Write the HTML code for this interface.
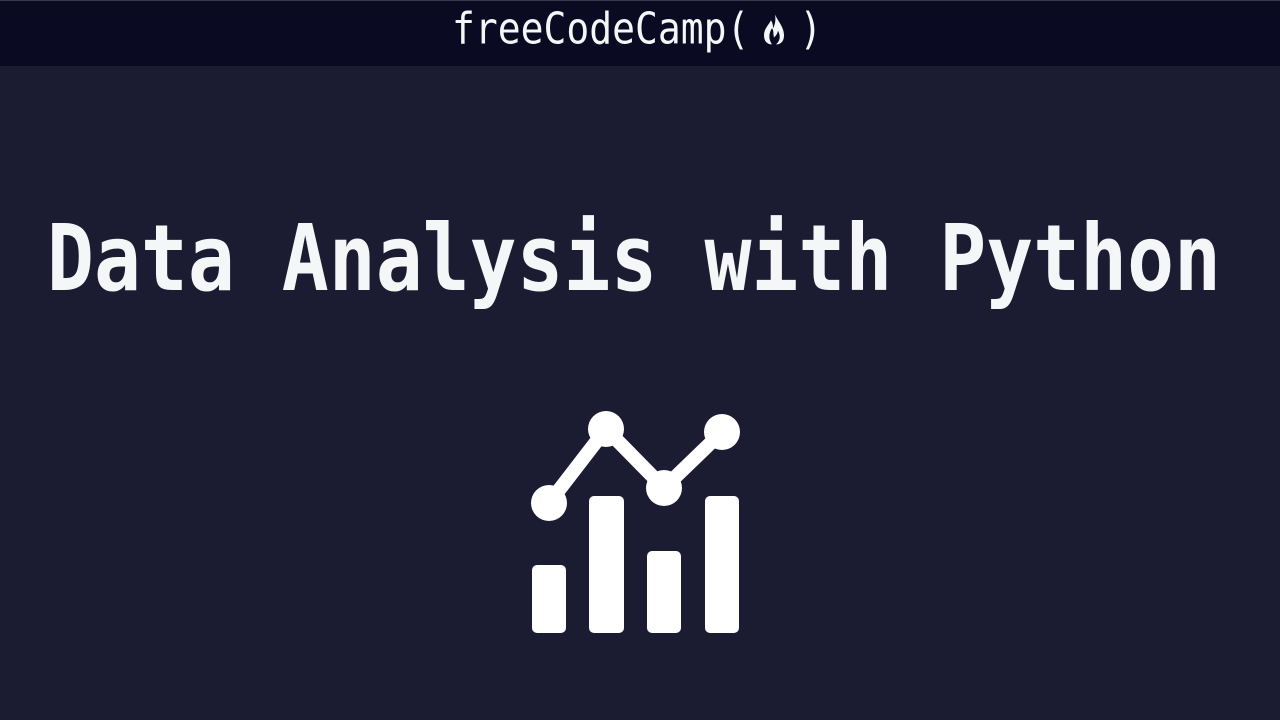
<!DOCTYPE html>
<html><head><style>
html,body{margin:0;padding:0;width:1280px;height:720px;overflow:hidden;background:#1b1b32;}
.hdr{position:absolute;left:0;top:0;width:1280px;height:66px;background:#0a0a23;border-top:1px solid #3b3b4f;box-sizing:border-box;}
.logo{position:absolute;left:452px;top:2px;font-family:"DejaVu Sans Mono","Liberation Mono",monospace;font-size:38px;color:#f5f6f7;font-weight:normal;transform:scaleY(1.15);transform-origin:left top;white-space:nowrap;}
.title{position:absolute;left:-6px;width:1280px;top:206px;text-align:center;font-family:"DejaVu Sans Mono","Liberation Mono",monospace;font-weight:bold;font-size:78px;color:#f5f6f7;white-space:nowrap;transform:scaleY(1.18);transform-origin:center top;line-height:90px;}
</style></head><body>
<div class="hdr"><div class="logo">freeCodeCamp(<svg width="50" height="32" viewBox="0 0 50 32" style="vertical-align:-4px"><path d="M26 3 C29 9 35 14 35 21 C35 27 31 29 27 29 C31 26 32 22 29 17 C28 21 26 22 25 23 C24 20 25 17 23 15 C20 19 19 24 23 29 C18 29 15 26 15 21 C15 15 20 12 22 8 C24 11 24 13 24 15 C26 12 27 8 26 3Z" fill="#f5f6f7"/></svg>)</div></div>
<div class="title">Data Analysis with Python</div>
<svg style="position:absolute;left:0;top:0" width="1280" height="720">
<g fill="#fff">
<polyline points="549,503 606,429 664,488 722,432" fill="none" stroke="#fff" stroke-width="14" stroke-linejoin="round"/>
<circle cx="549" cy="503" r="18"/><circle cx="606" cy="429" r="18"/><circle cx="664" cy="488" r="18"/><circle cx="722" cy="432" r="18"/>
<rect x="532" y="565" width="34" height="68" rx="5"/>
<rect x="589" y="496" width="35" height="137" rx="5"/>
<rect x="647" y="551" width="34" height="82" rx="5"/>
<rect x="705" y="496" width="34" height="137" rx="5"/>
</g></svg>
</body></html>
